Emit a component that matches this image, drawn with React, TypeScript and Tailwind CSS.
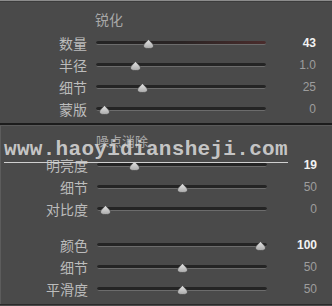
import React from "react";

type Row = { label: string; frac: number; value: string; strong?: boolean; tint?: boolean };

const sharpen: Row[] = [
  { label: "数量", frac: 43 / 150, value: "43", strong: true, tint: true },
  { label: "半径", frac: 0.2, value: "1.0" },
  { label: "细节", frac: 0.25, value: "25" },
  { label: "蒙版", frac: 0, value: "0" },
];

const luminance: Row[] = [
  { label: "明亮度", frac: 0.19, value: "19", strong: true },
  { label: "细节", frac: 0.5, value: "50" },
  { label: "对比度", frac: 0, value: "0" },
];

const color: Row[] = [
  { label: "颜色", frac: 1, value: "100", strong: true },
  { label: "细节", frac: 0.5, value: "50" },
  { label: "平滑度", frac: 0.5, value: "50" },
];

const cjk = "font-['Noto_Sans_CJK_SC','Noto_Sans',sans-serif]";

function Thumb() {
  return (
    <svg width="11" height="10" viewBox="0 0 11 10" className="block">
      <defs>
        <linearGradient id="tg" x1="0" y1="0" x2="0" y2="1">
          <stop offset="0" stopColor="#e6e6e6" />
          <stop offset="1" stopColor="#a9a9a9" />
        </linearGradient>
      </defs>
      <path d="M5.5 0.5 C7 2.5 10.5 5 10.5 7 C10.5 9 8.5 9.5 5.5 9.5 C2.5 9.5 0.5 9 0.5 7 C0.5 5 4 2.5 5.5 0.5 Z" fill="url(#tg)" stroke="#3a3a3a" strokeWidth="0.6" />
    </svg>
  );
}

function Slider({ row }: { row: Row }) {
  return (
    <div className="flex h-[22px] items-center">
      <div className={`w-[88px] pr-[1px] text-right text-[14px] leading-none text-[#bcbcbc] ${cjk}`}>{row.label}</div>
      <div className="relative ml-[8px] h-[10px] w-[170px]">
        <div
          className={`absolute left-0 right-0 top-[3px] h-[4px] rounded-full border-b border-[#6c6c6c] ${
            row.tint ? "bg-gradient-to-r from-[#242424] via-[#2a2424] to-[#4a2c2c]" : "bg-[#242424]"
          }`}
        />
        <div className="absolute top-[1px]" style={{ left: 8 + row.frac * 155 - 5.5 }}>
          <Thumb />
        </div>
      </div>
      <div
        className={`w-[50px] text-right text-[12px] leading-none font-['Liberation_Sans',sans-serif] ${
          row.strong ? "font-bold text-[#f2f2f2]" : "text-[#9d9d9d]"
        }`}
      >
        {row.value}
      </div>
    </div>
  );
}

export default function App() {
  return (
    <div className="relative h-[306px] w-[332px] overflow-hidden bg-[#4a4a4a]">
      <div className="h-[1px] bg-[#8c8c8c]" />
      <div className="h-[1px] bg-[#3c3c3c]" />
      <div className="h-[121px] pt-[4px]">
        <div className={`flex h-[26px] items-center pl-[95px] text-[14px] text-[#a8a8a8] ${cjk}`}>锐化</div>
        {sharpen.map((r) => (
          <Slider key={r.label} row={r} />
        ))}
      </div>
      <div className="h-[2px] bg-[#1c1c1c]" />
      <div className="h-[1px] bg-[#5a5a5a]" />
      <div className="h-[178px] border-l border-l-[#5c5c5c] pt-[5px]">
        <div className={`flex h-[23px] items-start pt-[3px] pl-[95px] text-[13px] leading-none text-[#a8a8a8] ${cjk}`}>噪点消除</div>
        {luminance.map((r) => (
          <Slider key={r.label} row={r} />
        ))}
        <div className="h-[14px]" />
        {color.map((r) => (
          <Slider key={r.label + "c"} row={r} />
        ))}
      </div>
      <div className="h-[1px] bg-[#2a2a2a]" />
      <div className="absolute left-[4px] top-[138px] w-[284px] border-b border-[#d0d0d0]">
        <div className="text-[21px] leading-[24px] font-bold tracking-[0.3px] text-[#d6d6d6]/90 font-['Liberation_Mono',monospace]">
          www.haoyidiansheji.com
        </div>
      </div>
    </div>
  );
}
